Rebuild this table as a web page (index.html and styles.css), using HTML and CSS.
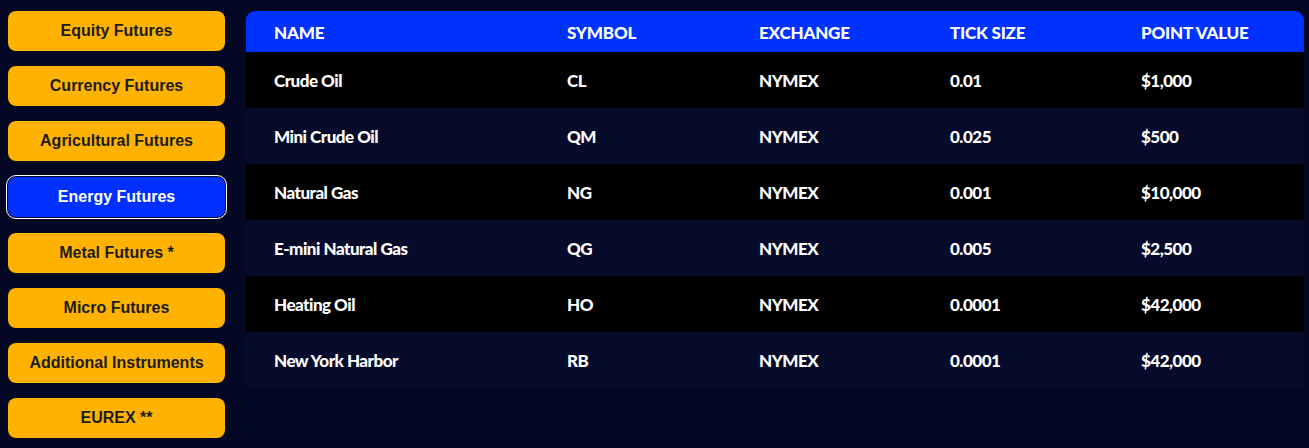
FILE: index.html
```html
<!DOCTYPE html>
<html lang="en">
<head>
<meta charset="utf-8">
<title>Futures</title>
<link rel="stylesheet" href="styles.css">
</head>
<body>
<div class="page">
  <nav class="sidebar">
    <button class="tab">Equity Futures</button>
    <button class="tab">Currency Futures</button>
    <button class="tab">Agricultural Futures</button>
    <button class="tab active">Energy Futures</button>
    <button class="tab">Metal Futures *</button>
    <button class="tab">Micro Futures</button>
    <button class="tab">Additional Instruments</button>
    <button class="tab">EUREX **</button>
  </nav>
  <div class="table">
    <div class="row head">
      <div class="cell">NAME</div><div class="cell">SYMBOL</div><div class="cell">EXCHANGE</div><div class="cell">TICK SIZE</div><div class="cell">POINT VALUE</div>
    </div>
    <div class="row odd">
      <div class="cell">Crude Oil</div><div class="cell">CL</div><div class="cell">NYMEX</div><div class="cell">0.01</div><div class="cell">$1,000</div>
    </div>
    <div class="row even">
      <div class="cell">Mini Crude Oil</div><div class="cell">QM</div><div class="cell">NYMEX</div><div class="cell">0.025</div><div class="cell">$500</div>
    </div>
    <div class="row odd">
      <div class="cell">Natural Gas</div><div class="cell">NG</div><div class="cell">NYMEX</div><div class="cell">0.001</div><div class="cell">$10,000</div>
    </div>
    <div class="row even">
      <div class="cell">E-mini Natural Gas</div><div class="cell">QG</div><div class="cell">NYMEX</div><div class="cell">0.005</div><div class="cell">$2,500</div>
    </div>
    <div class="row odd">
      <div class="cell">Heating Oil</div><div class="cell">HO</div><div class="cell">NYMEX</div><div class="cell">0.0001</div><div class="cell">$42,000</div>
    </div>
    <div class="row even">
      <div class="cell">New York Harbor</div><div class="cell">RB</div><div class="cell">NYMEX</div><div class="cell">0.0001</div><div class="cell">$42,000</div>
    </div>
  </div>
</div>
</body>
</html>
```
FILE: styles.css
```css
html, body {
  margin: 0;
  padding: 0;
  background: #040824;
  height: 100%;
}
.page {
  display: flex;
  align-items: flex-start;
  gap: 21px;
  padding: 11px 5px 0 8px;
}
.sidebar {
  width: 217px;
  flex: none;
  display: flex;
  flex-direction: column;
  gap: 15px;
}
.tab {
  height: 40px;
  border: none;
  border-radius: 8px;
  background: #ffb300;
  color: #1c1c1c;
  font-family: "Liberation Sans", Arial, sans-serif;
  font-weight: 700;
  font-size: 16px;
  padding: 0 4px 1px;
  cursor: pointer;
}
.tab.active {
  background: #0030ff;
  color: #fff;
  outline: 1.5px solid #ffffff;
  outline-offset: 1px;
  margin: 1px 0 1px;
}
.table {
  flex: 1;
  font-family: Lato, "Open Sans", sans-serif;
  color: #fff;
}
.row {
  display: grid;
  grid-template-columns: 293px 192px 191px 191px 1fr;
  height: 56px;
  align-items: center;
}
.row.head {
  height: 41px;
  background: #0032ff;
  border-radius: 9px 9px 0 0;
}
.row.odd {
  background: #000000;
}
.row.even {
  background: #070b2b;
}
.cell {
  padding-left: 28px;
  font-weight: 900;
  font-size: 17px;
  letter-spacing: -0.5px;
}
.row.head .cell {
  font-size: 17px;
  letter-spacing: -0.2px;
  padding-top: 1px;
}
```
